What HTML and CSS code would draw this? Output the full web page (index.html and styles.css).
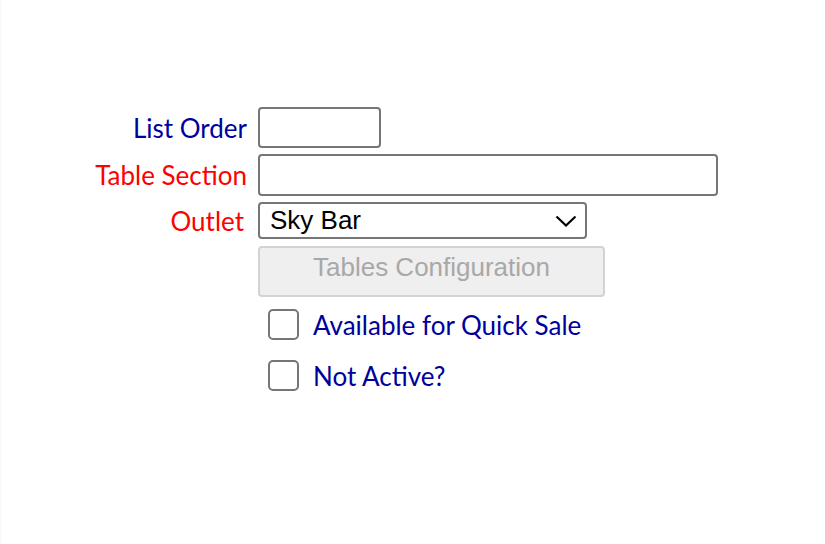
FILE: index.html
```html
<!DOCTYPE html>
<html>
<head>
<meta charset="utf-8">
<link rel="stylesheet" href="styles.css">
</head>
<body>
<div class="edge"></div>
<form class="form">
  <div class="row r1">
    <label class="lbl blue">List Order</label>
    <input class="inp short" type="text">
  </div>
  <div class="row r2">
    <label class="lbl red">Table Section</label>
    <input class="inp long" type="text">
  </div>
  <div class="row r3">
    <label class="lbl red outlet">Outlet</label>
    <div class="select">
      <span>Sky Bar</span>
      <svg class="chev" width="22" height="12" viewBox="0 0 22 12"><path d="M1.5 1.5 L11 10.5 L20.5 1.5" fill="none" stroke="#000" stroke-width="2.2"/></svg>
    </div>
  </div>
  <div class="row r4">
    <span class="lbl"></span>
    <button class="btn" type="button" disabled>Tables Configuration</button>
  </div>
  <div class="row r5">
    <span class="lbl"></span>
    <label class="chk"><span class="box"></span><span class="ctext">Available for Quick Sale</span></label>
  </div>
  <div class="row r6">
    <span class="lbl"></span>
    <label class="chk"><span class="box"></span><span class="ctext">Not Active?</span></label>
  </div>
</form>
</body>
</html>
```
FILE: styles.css
```css
html, body {
  margin: 0;
  padding: 0;
  background: #fff;
}
body {
  display: flex;
  min-height: 544px;
}
.edge {
  width: 2px;
  background: #fafafa;
  flex: none;
}
.form {
  padding-top: 107px;
  display: flex;
  flex-direction: column;
  margin-left: -2px;
}
.row {
  display: flex;
  align-items: center;
}
.lbl {
  width: 247px;
  flex: none;
  text-align: right;
  font-family: Lato, sans-serif;
  font-size: 26px;
  line-height: 30px;
  margin-right: 11px;
}
.blue { color: #00009c; }
.red { color: #ff0000; }
.outlet { padding-right: 3px; box-sizing: border-box; }
.inp {
  box-sizing: border-box;
  border: 2px solid #767676;
  border-radius: 4px;
  background: #fff;
  margin: 0;
  padding: 0 6px;
  font-family: "Liberation Sans", Arial, sans-serif;
  font-size: 26px;
}
.short { width: 123px; height: 41px; }
.long { width: 460px; height: 42px; }
.r2 { margin-top: 6px; }
.r3 { margin-top: 6px; }
.select {
  box-sizing: border-box;
  width: 329px;
  height: 37px;
  border: 2px solid #767676;
  border-radius: 4px;
  display: flex;
  align-items: center;
  justify-content: space-between;
  padding: 0 8px 0 10px;
  font-family: "Liberation Sans", Arial, sans-serif;
  font-size: 26px;
  color: #000;
}
.chev { margin-top: 1px; }
.r4 { margin-top: 7px; }
.btn {
  box-sizing: border-box;
  width: 347px;
  height: 51px;
  margin: 0;
  border: 2px solid #d3d3d3;
  border-radius: 4px;
  background: #efefef;
  color: #a8a8a8;
  font-family: "Liberation Sans", Arial, sans-serif;
  font-size: 26px;
  padding: 0 0 8px;
}
.r5 { margin-top: 12px; }
.r6 { margin-top: 20px; }
.chk {
  display: flex;
  align-items: center;
  padding-left: 10px;
}
.box {
  box-sizing: border-box;
  width: 31px;
  height: 31px;
  border: 2px solid #767676;
  border-radius: 5px;
  background: #fff;
}
.ctext {
  font-family: Lato, sans-serif;
  font-size: 26px;
  line-height: 30px;
  color: #00009c;
  margin-left: 14px;
}
```
